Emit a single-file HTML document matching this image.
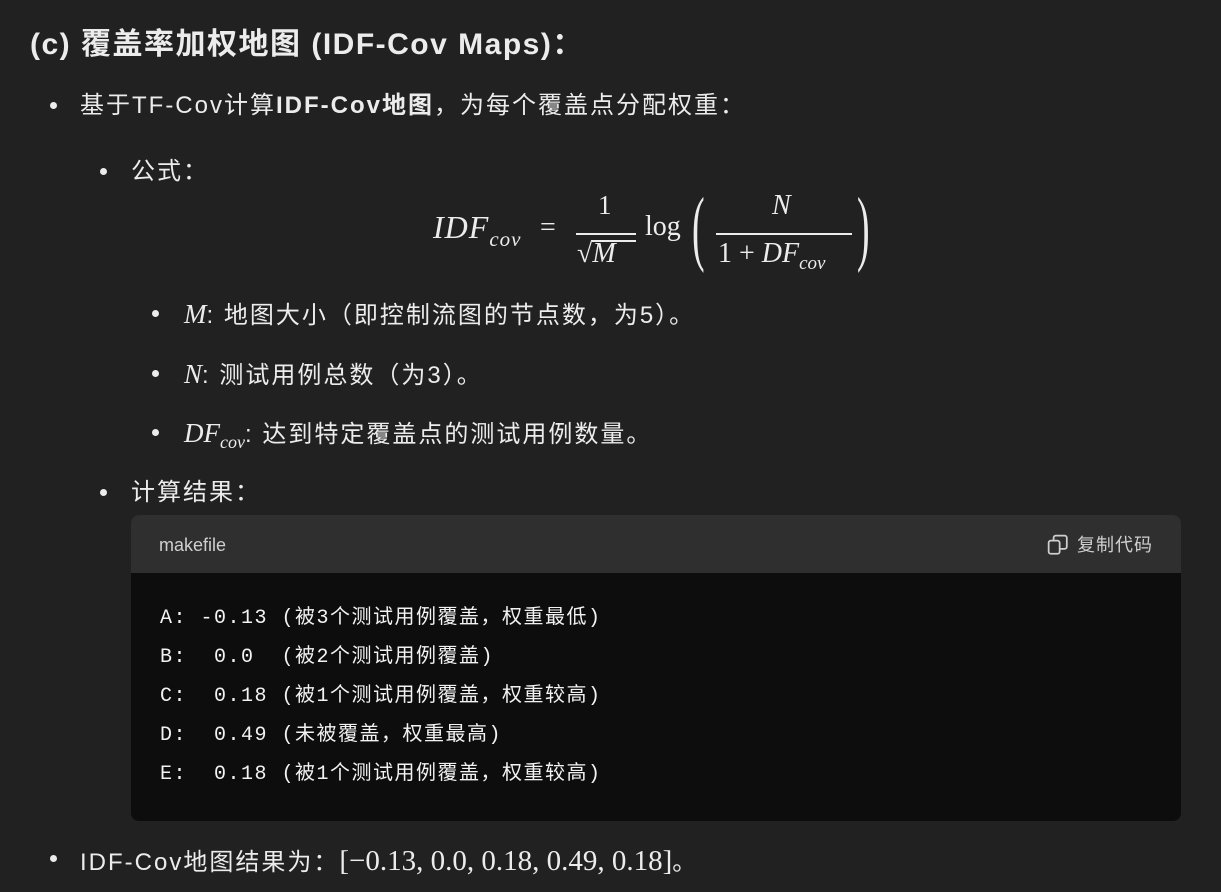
<!DOCTYPE html>
<html><head><meta charset="utf-8">
<style>
body{margin:0;width:1221px;height:892px;background:#212121;color:#ececec;font-family:"Liberation Sans","Noto Sans CJK SC",sans-serif;position:relative;overflow:hidden}
.a{position:absolute;white-space:nowrap;line-height:1}
.t{font-size:24px;letter-spacing:2px}
.dot{position:absolute;width:7px;height:7px;border-radius:50%;background:#ececec}
.m{font-family:"Liberation Serif","DejaVu Serif",serif;font-style:italic;letter-spacing:0}
.mr{font-family:"Liberation Serif","DejaVu Serif",serif;letter-spacing:0}
.code{position:absolute;left:131px;top:515px;width:1050px;height:306px;border-radius:8px;background:#0d0d0d;overflow:hidden}
.ch{height:58px;background:#2f2f2f;position:relative}
.cl{position:absolute;left:160px;font-family:"Liberation Mono","Noto Sans CJK SC",monospace;font-size:20px;letter-spacing:1.5px;color:#f2f2f2;white-space:pre;line-height:1}
</style></head><body>
<div class="a" style="left:30px;top:30px;font-size:30px;letter-spacing:1.5px;font-weight:bold">(c) 覆盖率加权地图 (IDF-Cov Maps)：</div>

<div class="dot" style="left:50px;top:102px"></div>
<div class="a t" style="left:80px;top:94px">基于TF-Cov计算<b>IDF-Cov地图</b>，为每个覆盖点分配权重：</div>

<div class="dot" style="left:100px;top:168px"></div>
<div class="a t" style="left:131px;top:160px">公式：</div>

<div class="a m" style="left:433px;top:211px;font-size:32px;letter-spacing:1px">IDF<span style="font-size:21px;position:relative;top:8px">cov</span></div>
<div class="a mr" style="left:540px;top:214px;font-size:28px">=</div>
<div class="a mr" style="left:598px;top:192px;font-size:27px">1</div>
<div style="position:absolute;left:576px;top:233px;width:60px;height:2px;background:#ececec"></div>
<div class="a mr" style="left:577px;top:240px;font-size:28px">√<span class="m">M</span></div>
<div style="position:absolute;left:592px;top:240px;width:44px;height:1.5px;background:#ececec"></div>
<div class="a mr" style="left:645px;top:213px;font-size:28px">log</div>
<div class="a mr" style="left:692px;top:186px;font-size:84px;transform:scaleX(.45);transform-origin:left">(</div>
<div class="a m" style="left:772px;top:192px;font-size:28px">N</div>
<div style="position:absolute;left:716px;top:233px;width:136px;height:2px;background:#ececec"></div>
<div class="a mr" style="left:718px;top:240px;font-size:28px">1 + <span class="m">DF<span style="font-size:19px;position:relative;top:7px">cov</span></span></div>
<div class="a mr" style="left:857px;top:186px;font-size:84px;transform:scaleX(.45);transform-origin:left">)</div>

<div class="dot" style="left:152px;top:310px"></div>
<div class="a t" style="left:184px;top:301px"><span class="m" style="font-size:27px">M</span>: 地图大小（即控制流图的节点数，为5）。</div>
<div class="dot" style="left:152px;top:370px"></div>
<div class="a t" style="left:184px;top:361px"><span class="m" style="font-size:27px">N</span>: 测试用例总数（为3）。</div>
<div class="dot" style="left:152px;top:429px"></div>
<div class="a t" style="left:184px;top:420px"><span class="m" style="font-size:27px">DF<span style="font-size:18px;position:relative;top:6px">cov</span></span>: 达到特定覆盖点的测试用例数量。</div>

<div class="dot" style="left:100px;top:489px"></div>
<div class="a t" style="left:131px;top:481px">计算结果：</div>

<div class="code">
 <div class="ch">
  <div class="a" style="left:28px;top:21px;font-size:18px;color:#cfcfcf">makefile</div>
  <svg style="position:absolute;left:916px;top:19px" width="22" height="22" viewBox="0 0 20 20" fill="none" stroke="#cfcfcf" stroke-width="1.6"><rect x="1.5" y="6" width="10" height="12" rx="2"/><path d="M6 6V3.5A2 2 0 0 1 8 1.5h8a2 2 0 0 1 2 2v8a2 2 0 0 1-2 2h-4.5"/></svg>
  <div class="a" style="left:946px;top:21px;font-size:18px;letter-spacing:1px;color:#cfcfcf">复制代码</div>
 </div>
</div>
<div class="cl" style="top:609px">A: -0.13 (被3个测试用例覆盖，权重最低)</div>
<div class="cl" style="top:648px">B:  0.0  (被2个测试用例覆盖)</div>
<div class="cl" style="top:687px">C:  0.18 (被1个测试用例覆盖，权重较高)</div>
<div class="cl" style="top:726px">D:  0.49 (未被覆盖，权重最高)</div>
<div class="cl" style="top:765px">E:  0.18 (被1个测试用例覆盖，权重较高)</div>

<div class="dot" style="left:50px;top:855px"></div>
<div class="a t" style="left:80px;top:847px">IDF-Cov地图结果为：<span class="mr" style="font-size:29px">[−0.13, 0.0, 0.18, 0.49, 0.18]</span>。</div>
</body></html>
